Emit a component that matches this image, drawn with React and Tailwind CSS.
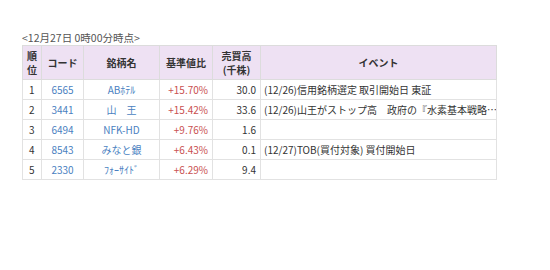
import React from 'react';

const rows = [
  { rank: 1, code: '6565', name: 'ABﾎﾃﾙ', ratio: '+15.70%', vol: '30.0', event: '(12/26)信用銘柄選定 取引開始日 東証' },
  { rank: 2, code: '3441', name: '山　王', ratio: '+15.42%', vol: '33.6', event: '(12/26)山王がストップ高　政府の『水素基本戦略…' },
  { rank: 3, code: '6494', name: 'NFK-HD', ratio: '+9.76%', vol: '1.6', event: '' },
  { rank: 4, code: '8543', name: 'みなと銀', ratio: '+6.43%', vol: '0.1', event: '(12/27)TOB(買付対象) 買付開始日' },
  { rank: 5, code: '2330', name: 'ﾌｫｰｻｲﾄﾞ', ratio: '+6.29%', vol: '9.4', event: '' },
];

const App = () => {
  return (
    <div
      className="w-[550px] h-[270px] bg-white pl-[22px] pt-[31px] text-[10px] text-[#333]"
      style={{ fontFamily: '"Noto Sans CJK JP", "Noto Sans", sans-serif' }}
    >
      {/* caption */}
      <div className="h-[14px] leading-[14px] text-[10.5px] text-[#555]">&lt;12月27日 0時00分時点&gt;</div>

      <table className="table-fixed border-collapse border border-[#dcdcdc] w-[475px]">
        <colgroup>
          <col className="w-[19px]" />
          <col className="w-[42px]" />
          <col className="w-[76px]" />
          <col className="w-[53px]" />
          <col className="w-[48px]" />
          <col />
        </colgroup>
        <thead>
          <tr className="h-[34px] bg-[#eee1f3] font-bold text-[#333] leading-[14px]">
            <th className="border border-[#dcdcdc] px-[1px] text-center">順<br />位</th>
            <th className="border border-[#dcdcdc] text-center">コード</th>
            <th className="border border-[#dcdcdc] text-center">銘柄名</th>
            <th className="border border-[#dcdcdc] text-center">基準値比</th>
            <th className="border border-[#dcdcdc] text-center">売買高<br />(千株)</th>
            <th className="border border-[#dcdcdc] text-center">イベント</th>
          </tr>
        </thead>
        <tbody>
          {rows.map((r) => (
            <tr key={r.rank} className="h-[20px] leading-[14px]">
              <td className="border border-[#e2e2e2] pl-[6px]">{r.rank}</td>
              <td className="border border-[#e2e2e2] text-center text-[#4a7fc1]">{r.code}</td>
              <td className="border border-[#e2e2e2] text-center text-[#4a7fc1]">{r.name}</td>
              <td className="border border-[#e2e2e2] text-right pr-[4px] text-[#c9504f]">{r.ratio}</td>
              <td className="border border-[#e2e2e2] text-right pr-[4px]">{r.vol}</td>
              <td className="border border-[#e2e2e2] pl-[3px] whitespace-nowrap overflow-hidden">{r.event}</td>
            </tr>
          ))}
        </tbody>
      </table>
    </div>
  );
};

export default App;
